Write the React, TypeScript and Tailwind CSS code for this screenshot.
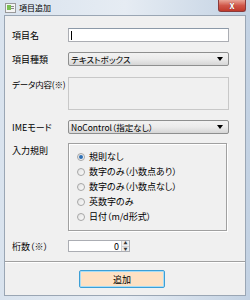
import React from 'react';

const font = "[font-family:'Noto_Sans_CJK_JP','Noto_Sans',sans-serif] [font-feature-settings:'palt']";

const rules = ['規則なし', '数字のみ（小数点あり）', '数字のみ（小数点なし）', '英数字のみ', '日付（m/d形式）'];

function Combo({ value }: { value: string }) {
  return (
    <div className="flex h-[14px] w-[161px] items-center justify-between rounded-[2px] border border-[#8e8f8f] bg-gradient-to-b from-[#f2f2f2] via-[#ebebeb] to-[#d6d6d6] pl-[2px] pr-[5px]">
      <span className="whitespace-nowrap text-[8.5px] leading-none text-black">{value}</span>
      <svg width="6" height="4" viewBox="0 0 6 4">
        <path d="M0 0h6L3 4z" fill="#000" />
      </svg>
    </div>
  );
}

function Radio({ label, checked }: { label: string; checked?: boolean }) {
  return (
    <div className="flex h-[15px] items-center gap-[4px]">
      <span className="flex h-[8px] w-[8px] items-center justify-center rounded-full border border-[#a6a6a6] bg-gradient-to-br from-[#e4e4e4] to-[#fafafa]">
        {checked && <span className="h-[4px] w-[4px] rounded-full bg-[#2d6fb5]" />}
      </span>
      <span className="whitespace-nowrap text-[9px] leading-none text-black">{label}</span>
    </div>
  );
}

export default function App() {
  return (
    <div className={`${font} relative flex h-[300px] w-[250px] flex-col bg-gradient-to-r from-[#d9e3ee] via-[#e6ecf3] to-[#c3d2e3] px-[4px] pb-[4px]`}>
      {/* title bar */}
      <div className="flex h-[15px] shrink-0 items-center gap-[3px] pl-[1px]">
        <svg width="11" height="10" viewBox="0 0 11 10">
          <rect x="0.5" y="0.5" width="10" height="9" fill="#f4f4f4" stroke="#9a9a9a" />
          <rect x="2" y="2" width="4" height="5" fill="#7bbf52" />
          <rect x="6" y="3" width="3" height="1" fill="#888" />
          <rect x="6" y="5" width="3" height="1" fill="#888" />
        </svg>
        <span className="text-[8px] leading-none text-black">項目追加</span>
      </div>
      <div className="absolute right-[4px] top-0 flex h-[12px] w-[28px] items-center justify-center rounded-b-[3px] border border-t-0 border-[#8a3a3a] bg-gradient-to-b from-[#e8a598] via-[#d0574a] to-[#c0392b]">
        <span className="text-[9px] font-bold leading-none text-white [text-shadow:0_0_1px_#5a1010]">x</span>
      </div>

      {/* client area */}
      <div className="flex flex-1 flex-col border border-[#9aa6b4] bg-[#f0f0f0]">
        <div className="flex flex-col px-[7px] pt-[12px]">
          <div className="flex items-center">
            <span className="w-[56px] whitespace-nowrap text-[9px] leading-none text-black">項目名</span>
            <div className="flex h-[14px] w-[161px] items-center border border-[#abadb3] border-t-[#8c99a8] bg-white pl-[2px]">
              <span className="h-[9px] w-px bg-black" />
            </div>
          </div>
          <div className="mt-[10px] flex items-center">
            <span className="w-[56px] whitespace-nowrap text-[9px] leading-none text-black">項目種類</span>
            <Combo value="テキストボックス" />
          </div>
          <div className="mt-[11px] flex items-start">
            <span className="mt-[3px] w-[56px] shrink-0 whitespace-nowrap text-[8.5px] leading-none tracking-[-0.2px] text-black">データ内容(※)</span>
            <div className="h-[33px] w-[161px] border border-[#c8c8c8]" />
          </div>
          <div className="mt-[10px] flex items-center">
            <span className="w-[56px] whitespace-nowrap text-[9px] leading-none text-black">IMEモード</span>
            <Combo value="NoControl（指定なし）" />
          </div>
          <div className="mt-[9px] flex items-start">
            <span className="mt-[3px] w-[56px] whitespace-nowrap text-[9px] leading-none text-black">入力規則</span>
            <div className="flex h-[88px] w-[159px] flex-col border border-[#a0a0a0] pl-[8px] pt-[5px] shadow-[inset_1px_1px_0_#fff,1px_1px_0_#fff]">
              {rules.map((r, i) => (
                <Radio key={r} label={r} checked={i === 0} />
              ))}
            </div>
          </div>
          <div className="mt-[9px] flex items-center">
            <span className="w-[56px] whitespace-nowrap text-[9px] leading-none text-black">桁数（※）</span>
            <div className="flex h-[12px] w-[62px] border border-[#abadb3] bg-white">
              <span className="flex flex-1 items-center justify-end pr-[2px] text-[9px] leading-none text-black">0</span>
              <div className="flex w-[8px] flex-col border-l border-[#d0d0d0] bg-[#eeeeee]">
                <span className="flex flex-1 items-center justify-center border-b border-[#d0d0d0] text-[4px] leading-none text-[#333]">▲</span>
                <span className="flex flex-1 items-center justify-center text-[4px] leading-none text-[#333]">▼</span>
              </div>
            </div>
          </div>
        </div>
        <div className="mt-[9px] h-[2px] border-t border-b border-t-[#a0a0a0] border-b-white" />
        <div className="flex flex-1 items-start justify-center pt-[7px]">
          <div className="ml-[-6px] flex h-[18px] w-[86px] items-center justify-center rounded-[2px] border border-[#3c9fd6] bg-[#fde1c4] shadow-[inset_0_0_0_1px_#a8dcf5]">
            <span className="text-[9px] leading-none text-black">追加</span>
          </div>
        </div>
      </div>
    </div>
  );
}
